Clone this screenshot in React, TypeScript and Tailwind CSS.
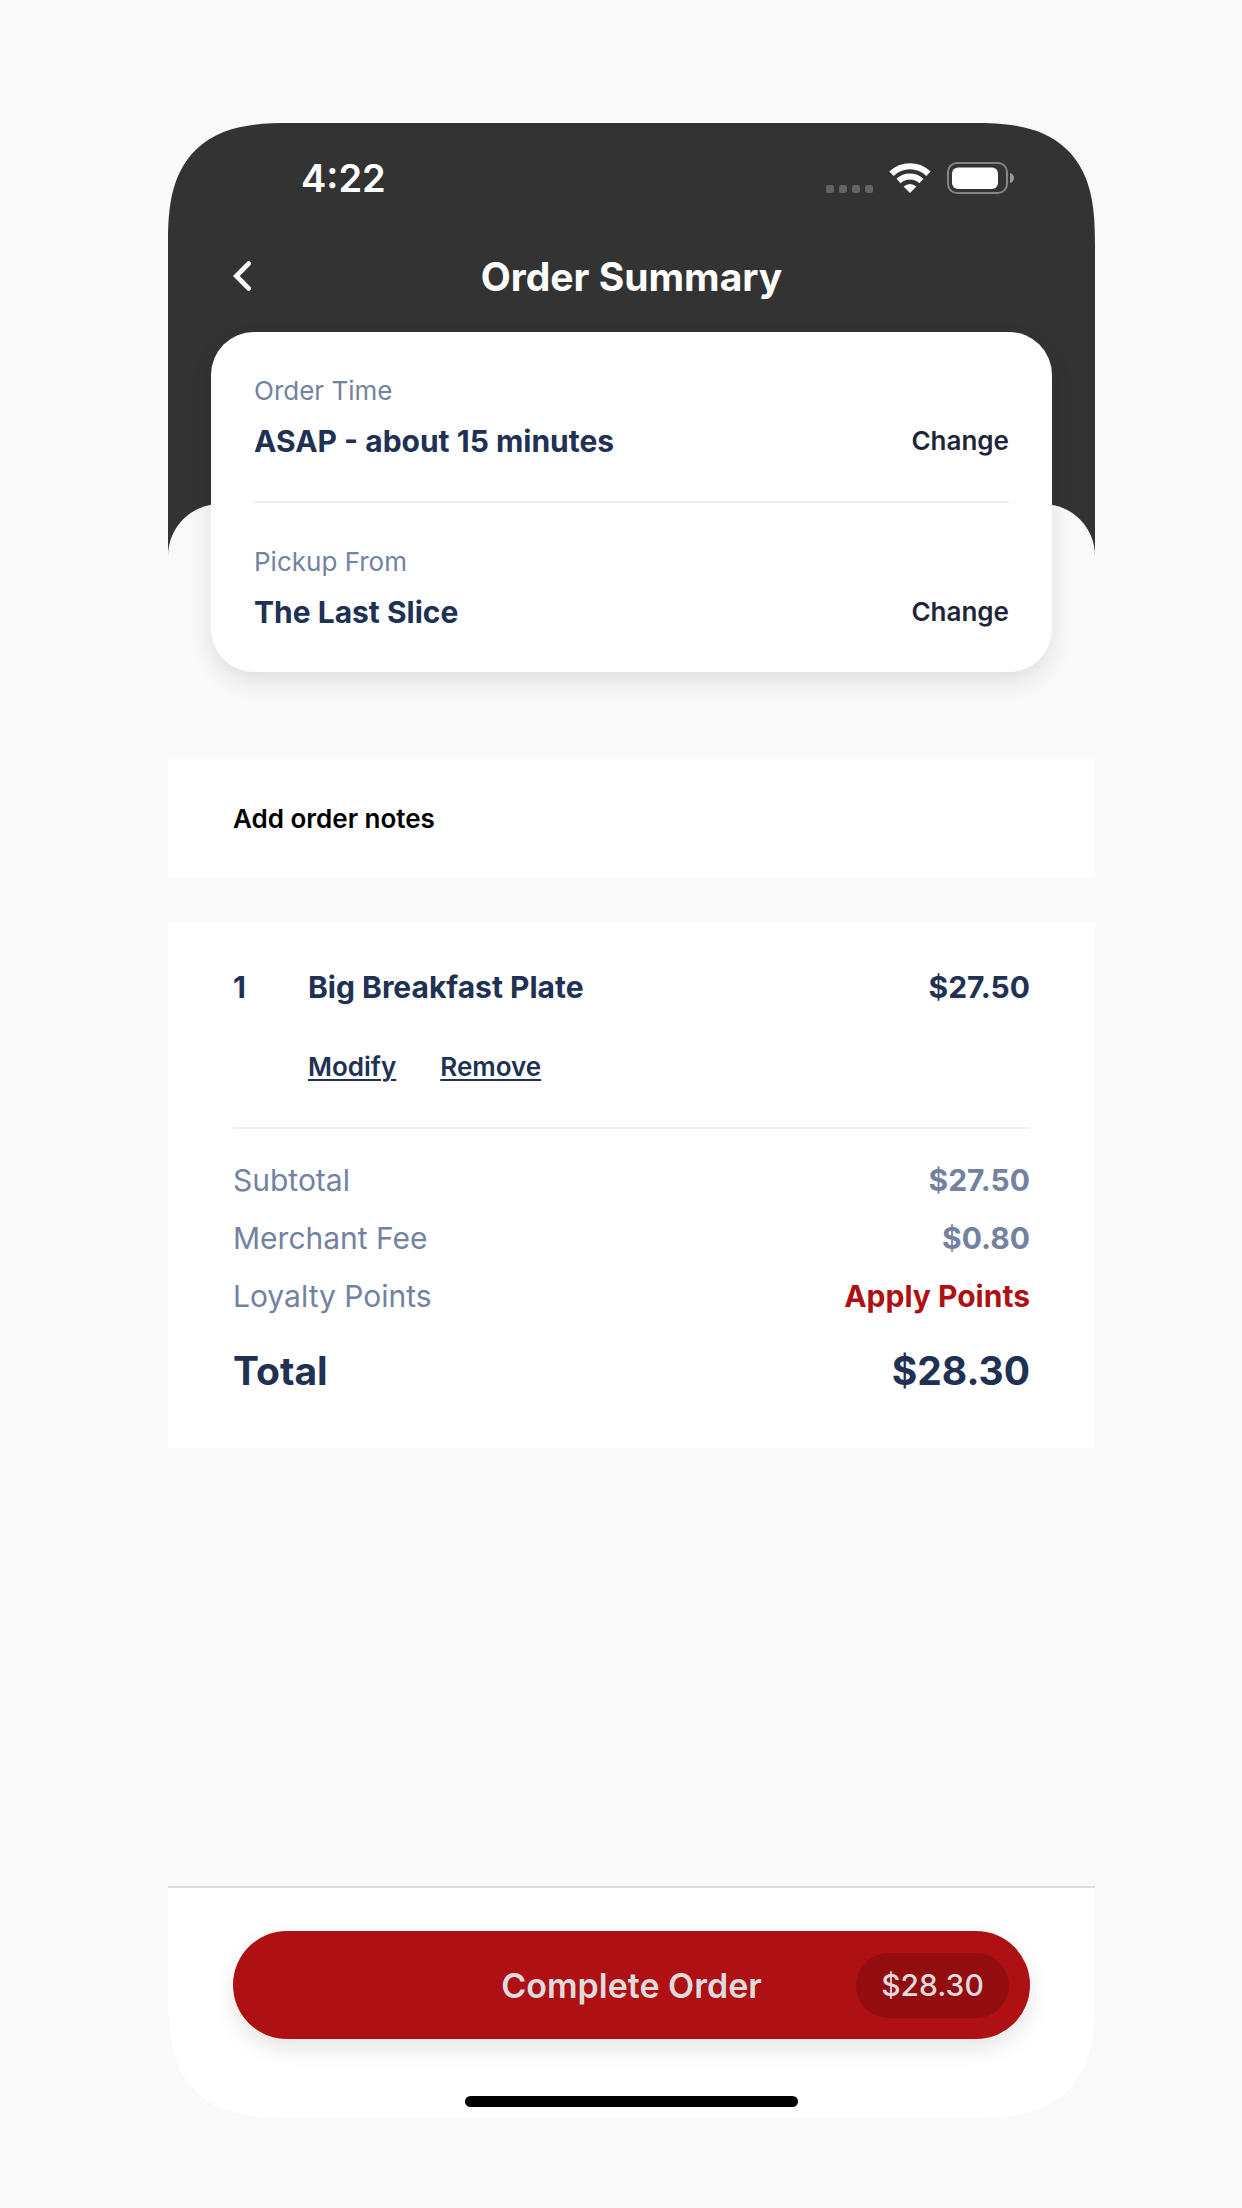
import React from 'react';

const details = [
  { label: 'Order Time', value: 'ASAP - about 15 minutes' },
  { label: 'Pickup From', value: 'The Last Slice' },
];

const fees = [
  { label: 'Subtotal', amount: '$27.50' },
  { label: 'Merchant Fee', amount: '$0.80' },
];

const StatusBar = () => (
  <div className="flex h-[110px] items-center justify-between pl-[133px] pr-[81px]">
    <span className="text-[38px] leading-none font-semibold">4:22</span>
    <div className="flex items-center gap-4">
      <svg width="47" height="32" viewBox="0 0 47 32" fill="#636363" aria-hidden="true">
        <rect x="0" y="23" width="8" height="8" rx="2.5" />
        <rect x="13" y="23" width="8" height="8" rx="2.5" />
        <rect x="26" y="23" width="8" height="8" rx="2.5" />
        <rect x="39" y="23" width="8" height="8" rx="2.5" />
      </svg>
      <svg width="42" height="32" viewBox="0 0 42 32" fill="none" stroke="white" aria-hidden="true">
        <path d="M2.5 11.800A26.500 26.500 0 0 1 39.500 11.800" strokeWidth="6.2" />
        <path d="M9.600 19A16.500 16.500 0 0 1 32.400 19" strokeWidth="6" />
        <path d="M21 31L14.600 24.600Q21 19.600 27.400 24.600Z" fill="white" stroke="none" />
      </svg>
      <svg width="67" height="32" viewBox="0 0 67 32" fill="none" aria-hidden="true">
        <rect x="1" y="1" width="59" height="30" rx="9" stroke="#848484" strokeWidth="2" />
        <rect x="5" y="5.500" width="46" height="21.500" rx="6" fill="white" />
        <path d="M63 11C65.500 11.500 67 13.500 67 16S65.500 20.500 63 21Z" fill="#999999" />
      </svg>
    </div>
  </div>
);

const App = () => {
  return (
    <div className="flex min-h-screen flex-col bg-[#f9f9f9] pt-[123px] pr-[147px] pb-[90px] pl-[168px] font-['Inter',sans-serif] text-[#203153]">
      <div className="flex flex-1 flex-col overflow-hidden rounded-[92px] supports-[corner-shape:squircle]:rounded-[122px] supports-[corner-shape:squircle]:[corner-shape:superellipse(1.45)]">
        <header className="bg-[#333333] pb-[237px] text-white">
          <StatusBar />
          <div className="grid h-[86px] grid-cols-[1fr_auto_1fr] items-center px-16">
            <button aria-label="Back" className="w-fit">
              <svg width="20" height="30" viewBox="0 0 20 30" fill="none" stroke="white" strokeWidth="4.8" strokeLinecap="round" strokeLinejoin="miter">
                <path d="M16.600 2.600L4.400 15L16.600 27.400" />
              </svg>
            </button>
            <h1 className="text-[39px] leading-none font-bold">Order Summary</h1>
          </div>
        </header>

        <main className="-mt-[52px] flex-1 rounded-t-[52px] bg-[#f9f9f9] pb-10">
          {/* Time and pickup card, pulled up over the header */}
          <section className="relative mx-[43px] -mt-[172px] rounded-[43px] bg-white px-[43px] shadow-[0_10px_22px_rgba(0,0,0,0.1)]">
            {details.map((item) => (
              <div key={item.label} className="border-b-2 border-[#efefef] py-[43px] last:border-b-0">
                <p className="text-[26px] leading-8 text-[#7382a0]">{item.label}</p>
                <div className="mt-[17px] flex items-center justify-between leading-[34px]">
                  <p className="text-[30px] font-bold">{item.value}</p>
                  <button className="text-[26px] font-semibold text-[#1f2539]">Change</button>
                </div>
              </div>
            ))}
          </section>

          <button className="mt-[87px] block h-[119px] w-full bg-white px-[65px] text-left text-[26px] font-semibold text-black">
            Add order notes
          </button>

          <section className="mt-[43px] bg-white px-[65px] pt-[43px] pb-[53px]">
            <div className="flex border-b-2 border-[#efefef] pb-[42px]">
              <span className="w-[75px] text-[30px] leading-[46px] font-bold">1</span>
              <div className="flex-1">
                <div className="flex justify-between text-[30px] leading-[46px] font-bold">
                  <h2>Big Breakfast Plate</h2>
                  <span>$27.50</span>
                </div>
                <div className="mt-[39px] flex gap-11 text-[26px] leading-9 font-semibold">
                  <button className="underline decoration-2 underline-offset-3">Modify</button>
                  <button className="underline decoration-2 underline-offset-3">Remove</button>
                </div>
              </div>
            </div>

            <div className="pt-[22px] text-[30px] leading-[58px] text-[#7382a0]">
              {fees.map((fee) => (
                <div key={fee.label} className="flex justify-between">
                  <span>{fee.label}</span>
                  <span className="font-bold">{fee.amount}</span>
                </div>
              ))}
              <div className="flex justify-between">
                <span>Loyalty Points</span>
                <button className="font-bold text-[#ae1013]">Apply Points</button>
              </div>
            </div>
            <div className="mt-[22px] flex justify-between text-[39px] leading-[48px] font-bold">
              <span>Total</span>
              <span>$28.30</span>
            </div>
          </section>
        </main>

        <footer className="border-t-2 border-[#dddddd] bg-white px-[65px] pt-[43px] pb-[11px]">
          <button className="grid h-[108px] w-full grid-cols-[1fr_auto_1fr] items-center rounded-full bg-[#ae1013] px-[21px] font-medium text-[#dfdbdc] shadow-[0_10px_22px_rgba(0,0,0,0.1)]">
            <span className="col-start-2 text-[34px] font-semibold">Complete Order</span>
            <span className="flex h-[65px] w-[153px] items-center justify-center justify-self-end rounded-full bg-[#930d10] text-[30px]">$28.30</span>
          </button>
          <div className="mx-auto mt-[57px] h-[11px] w-[333px] rounded-full bg-black" />
        </footer>
      </div>
    </div>
  );
};

export default App;
